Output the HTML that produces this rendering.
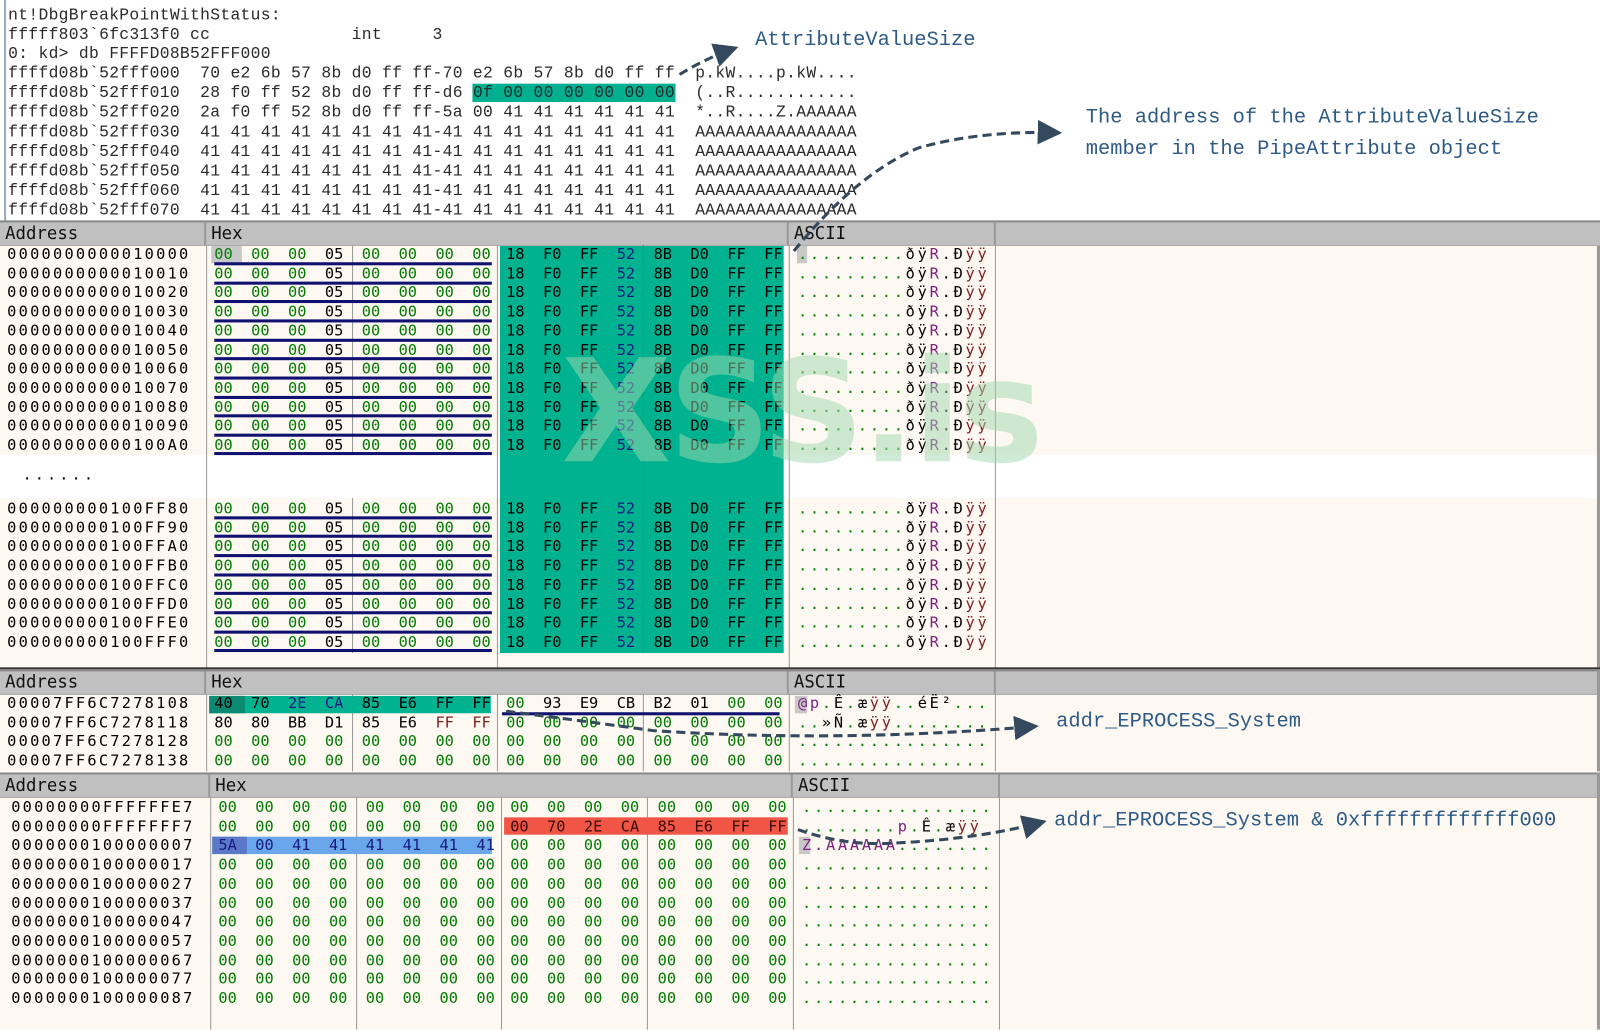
<!DOCTYPE html>
<html><head><meta charset="utf-8"><style>
body{margin:0;width:1600px;height:1009px;position:relative;overflow:hidden;background:#fff;font-family:"DejaVu Sans Mono",monospace}
#w{position:absolute;left:0;top:0;width:1568px;height:989px;transform:scale(1.0204);transform-origin:0 0}
.t{position:absolute;left:8px;font:16px/19.1px "Liberation Mono",monospace;letter-spacing:0.3px;color:#2a2a2a;white-space:pre;margin:0}
.bg{position:absolute;background:#fdf8f1}
.hd{position:absolute;background:#c0c0c0;height:22px;font:17px/22px "DejaVu Sans Mono",monospace;color:#111;border-top:2px solid #8a8a8a;border-bottom:1px solid #aaa}
.hd span{position:absolute;top:0;padding-left:5px;border-right:2px solid #9a9a9a;height:22px;box-sizing:border-box}
.r{position:absolute;left:0;height:18.7px;font:15px/18.7px "DejaVu Sans Mono",monospace;white-space:pre}
.r span{position:absolute;top:0}
.r b,.r i{font-weight:normal;font-style:normal}
.a{left:7px;letter-spacing:2.2px;color:#000}
.h1{left:210px;color:#007a00}
.h2{left:496px;color:#007a00}
.s{left:782px;letter-spacing:2.7px;color:#008000}
.k{color:#000}.n{color:#1a1a80}.p{color:#802080}.b{color:#802020}
.tl .h2{color:#000}
.vl{position:absolute;width:1px;background:#999}
.ul{position:absolute;height:3px;background:#101070}
.ann{position:absolute;font:20px/31px "Liberation Mono",monospace;color:#2d5a86;white-space:pre}
</style></head><body><div id="w">
<div style="position:absolute;left:4px;top:0;width:2px;height:218px;background:#9ab"></div>
<pre class="t" style="top:6px">nt!DbgBreakPointWithStatus:
fffff803`6fc313f0 cc              int     3
0: kd&gt; db FFFFD08B52FFF000
ffffd08b`52fff000  70 e2 6b 57 8b d0 ff ff-70 e2 6b 57 8b d0 ff ff  p.kW....p.kW....
ffffd08b`52fff010  28 f0 ff 52 8b d0 ff ff-d6 <span style="background:#00b08f">0f 00 00 00 00 00 00</span>  (..R............
ffffd08b`52fff020  2a f0 ff 52 8b d0 ff ff-5a 00 41 41 41 41 41 41  *..R....Z.AAAAAA
ffffd08b`52fff030  41 41 41 41 41 41 41 41-41 41 41 41 41 41 41 41  AAAAAAAAAAAAAAAA
ffffd08b`52fff040  41 41 41 41 41 41 41 41-41 41 41 41 41 41 41 41  AAAAAAAAAAAAAAAA
ffffd08b`52fff050  41 41 41 41 41 41 41 41-41 41 41 41 41 41 41 41  AAAAAAAAAAAAAAAA
ffffd08b`52fff060  41 41 41 41 41 41 41 41-41 41 41 41 41 41 41 41  AAAAAAAAAAAAAAAA
ffffd08b`52fff070  41 41 41 41 41 41 41 41-41 41 41 41 41 41 41 41  AAAAAAAAAAAAAAAA</pre>

<div class="bg" style="left:0;top:239px;width:1565px;height:207px"></div>
<div class="bg" style="left:0;top:488px;width:1565px;height:167px"></div>
<div style="position:absolute;left:1565px;top:217px;width:3px;height:440px;background:#999"></div>
<div style="position:absolute;left:490px;top:240px;width:278px;height:400px;background:#00b28f"></div>
<div class="hd" style="left:0;top:216px;width:1568px"><span style="left:0;width:202px">Address</span><span style="left:202px;width:571px">Hex</span><span style="left:773px;width:203px">ASCII</span></div>
<div class="vl" style="left:202px;top:240px;height:415px"></div>
<div class="vl" style="left:345px;top:240px;height:206px"></div>
<div class="vl" style="left:345px;top:488px;height:152px"></div>
<div class="vl" style="left:487px;top:240px;height:415px"></div>
<div class="vl" style="left:630px;top:240px;height:400px;background:#0a7"></div>
<div class="vl" style="left:773px;top:240px;height:415px"></div>
<div class="vl" style="left:975px;top:240px;height:415px"></div>
<div style="position:absolute;left:0;top:654px;width:1568px;height:2px;background:#333"></div>
<div style="position:absolute;left:207px;top:241px;width:30px;height:17px;background:#c8c8c8"></div>
<div style="position:absolute;left:781px;top:241px;width:10px;height:17px;background:#c8c8c8"></div>

<div class="r tl" style="top:240px"><span class="a">0000000000010000</span><span class="h1">00  00  00  <b class="k">05</b>  00  00  00  00</span><span class="h2">18  F0  FF  <i class="n">52</i>  8B  D0  FF  FF</span><span class="s">.........<b class="k">ðÿ</b><b class="p">R</b><b class="k">.Ð</b><b class="b">ÿÿ</b></span></div>
<div class="r tl" style="top:258.7px"><span class="a">0000000000010010</span><span class="h1">00  00  00  <b class="k">05</b>  00  00  00  00</span><span class="h2">18  F0  FF  <i class="n">52</i>  8B  D0  FF  FF</span><span class="s">.........<b class="k">ðÿ</b><b class="p">R</b><b class="k">.Ð</b><b class="b">ÿÿ</b></span></div>
<div class="r tl" style="top:277.4px"><span class="a">0000000000010020</span><span class="h1">00  00  00  <b class="k">05</b>  00  00  00  00</span><span class="h2">18  F0  FF  <i class="n">52</i>  8B  D0  FF  FF</span><span class="s">.........<b class="k">ðÿ</b><b class="p">R</b><b class="k">.Ð</b><b class="b">ÿÿ</b></span></div>
<div class="r tl" style="top:296.1px"><span class="a">0000000000010030</span><span class="h1">00  00  00  <b class="k">05</b>  00  00  00  00</span><span class="h2">18  F0  FF  <i class="n">52</i>  8B  D0  FF  FF</span><span class="s">.........<b class="k">ðÿ</b><b class="p">R</b><b class="k">.Ð</b><b class="b">ÿÿ</b></span></div>
<div class="r tl" style="top:314.8px"><span class="a">0000000000010040</span><span class="h1">00  00  00  <b class="k">05</b>  00  00  00  00</span><span class="h2">18  F0  FF  <i class="n">52</i>  8B  D0  FF  FF</span><span class="s">.........<b class="k">ðÿ</b><b class="p">R</b><b class="k">.Ð</b><b class="b">ÿÿ</b></span></div>
<div class="r tl" style="top:333.5px"><span class="a">0000000000010050</span><span class="h1">00  00  00  <b class="k">05</b>  00  00  00  00</span><span class="h2">18  F0  FF  <i class="n">52</i>  8B  D0  FF  FF</span><span class="s">.........<b class="k">ðÿ</b><b class="p">R</b><b class="k">.Ð</b><b class="b">ÿÿ</b></span></div>
<div class="r tl" style="top:352.2px"><span class="a">0000000000010060</span><span class="h1">00  00  00  <b class="k">05</b>  00  00  00  00</span><span class="h2">18  F0  FF  <i class="n">52</i>  8B  D0  FF  FF</span><span class="s">.........<b class="k">ðÿ</b><b class="p">R</b><b class="k">.Ð</b><b class="b">ÿÿ</b></span></div>
<div class="r tl" style="top:370.9px"><span class="a">0000000000010070</span><span class="h1">00  00  00  <b class="k">05</b>  00  00  00  00</span><span class="h2">18  F0  FF  <i class="n">52</i>  8B  D0  FF  FF</span><span class="s">.........<b class="k">ðÿ</b><b class="p">R</b><b class="k">.Ð</b><b class="b">ÿÿ</b></span></div>
<div class="r tl" style="top:389.6px"><span class="a">0000000000010080</span><span class="h1">00  00  00  <b class="k">05</b>  00  00  00  00</span><span class="h2">18  F0  FF  <i class="n">52</i>  8B  D0  FF  FF</span><span class="s">.........<b class="k">ðÿ</b><b class="p">R</b><b class="k">.Ð</b><b class="b">ÿÿ</b></span></div>
<div class="r tl" style="top:408.3px"><span class="a">0000000000010090</span><span class="h1">00  00  00  <b class="k">05</b>  00  00  00  00</span><span class="h2">18  F0  FF  <i class="n">52</i>  8B  D0  FF  FF</span><span class="s">.........<b class="k">ðÿ</b><b class="p">R</b><b class="k">.Ð</b><b class="b">ÿÿ</b></span></div>
<div class="r tl" style="top:427px"><span class="a">00000000000100A0</span><span class="h1">00  00  00  <b class="k">05</b>  00  00  00  00</span><span class="h2">18  F0  FF  <i class="n">52</i>  8B  D0  FF  FF</span><span class="s">.........<b class="k">ðÿ</b><b class="p">R</b><b class="k">.Ð</b><b class="b">ÿÿ</b></span></div>
<div class="r" style="top:456px"><span class="a" style="left:22px;letter-spacing:3px">......</span></div>
<div class="r tl" style="top:489px"><span class="a">000000000100FF80</span><span class="h1">00  00  00  <b class="k">05</b>  00  00  00  00</span><span class="h2">18  F0  FF  <i class="n">52</i>  8B  D0  FF  FF</span><span class="s">.........<b class="k">ðÿ</b><b class="p">R</b><b class="k">.Ð</b><b class="b">ÿÿ</b></span></div>
<div class="r tl" style="top:507.7px"><span class="a">000000000100FF90</span><span class="h1">00  00  00  <b class="k">05</b>  00  00  00  00</span><span class="h2">18  F0  FF  <i class="n">52</i>  8B  D0  FF  FF</span><span class="s">.........<b class="k">ðÿ</b><b class="p">R</b><b class="k">.Ð</b><b class="b">ÿÿ</b></span></div>
<div class="r tl" style="top:526.4px"><span class="a">000000000100FFA0</span><span class="h1">00  00  00  <b class="k">05</b>  00  00  00  00</span><span class="h2">18  F0  FF  <i class="n">52</i>  8B  D0  FF  FF</span><span class="s">.........<b class="k">ðÿ</b><b class="p">R</b><b class="k">.Ð</b><b class="b">ÿÿ</b></span></div>
<div class="r tl" style="top:545.1px"><span class="a">000000000100FFB0</span><span class="h1">00  00  00  <b class="k">05</b>  00  00  00  00</span><span class="h2">18  F0  FF  <i class="n">52</i>  8B  D0  FF  FF</span><span class="s">.........<b class="k">ðÿ</b><b class="p">R</b><b class="k">.Ð</b><b class="b">ÿÿ</b></span></div>
<div class="r tl" style="top:563.8px"><span class="a">000000000100FFC0</span><span class="h1">00  00  00  <b class="k">05</b>  00  00  00  00</span><span class="h2">18  F0  FF  <i class="n">52</i>  8B  D0  FF  FF</span><span class="s">.........<b class="k">ðÿ</b><b class="p">R</b><b class="k">.Ð</b><b class="b">ÿÿ</b></span></div>
<div class="r tl" style="top:582.5px"><span class="a">000000000100FFD0</span><span class="h1">00  00  00  <b class="k">05</b>  00  00  00  00</span><span class="h2">18  F0  FF  <i class="n">52</i>  8B  D0  FF  FF</span><span class="s">.........<b class="k">ðÿ</b><b class="p">R</b><b class="k">.Ð</b><b class="b">ÿÿ</b></span></div>
<div class="r tl" style="top:601.2px"><span class="a">000000000100FFE0</span><span class="h1">00  00  00  <b class="k">05</b>  00  00  00  00</span><span class="h2">18  F0  FF  <i class="n">52</i>  8B  D0  FF  FF</span><span class="s">.........<b class="k">ðÿ</b><b class="p">R</b><b class="k">.Ð</b><b class="b">ÿÿ</b></span></div>
<div class="r tl" style="top:619.9px"><span class="a">000000000100FFF0</span><span class="h1">00  00  00  <b class="k">05</b>  00  00  00  00</span><span class="h2">18  F0  FF  <i class="n">52</i>  8B  D0  FF  FF</span><span class="s">.........<b class="k">ðÿ</b><b class="p">R</b><b class="k">.Ð</b><b class="b">ÿÿ</b></span></div>
<div class="ul" style="left:210px;top:257px;width:272px"></div>
<div class="ul" style="left:210px;top:276px;width:272px"></div>
<div class="ul" style="left:210px;top:294px;width:272px"></div>
<div class="ul" style="left:210px;top:313px;width:272px"></div>
<div class="ul" style="left:210px;top:332px;width:272px"></div>
<div class="ul" style="left:210px;top:350px;width:272px"></div>
<div class="ul" style="left:210px;top:369px;width:272px"></div>
<div class="ul" style="left:210px;top:388px;width:272px"></div>
<div class="ul" style="left:210px;top:406px;width:272px"></div>
<div class="ul" style="left:210px;top:425px;width:272px"></div>
<div class="ul" style="left:210px;top:443px;width:272px"></div>
<div class="ul" style="left:210px;top:506px;width:272px"></div>
<div class="ul" style="left:210px;top:524px;width:272px"></div>
<div class="ul" style="left:210px;top:543px;width:272px"></div>
<div class="ul" style="left:210px;top:562px;width:272px"></div>
<div class="ul" style="left:210px;top:580px;width:272px"></div>
<div class="ul" style="left:210px;top:599px;width:272px"></div>
<div class="ul" style="left:210px;top:618px;width:272px"></div>
<div class="ul" style="left:210px;top:636px;width:272px"></div>

<div style="position:absolute;left:550px;top:335px;font:bold 140px/1 'DejaVu Sans',sans-serif;color:rgba(160,215,175,.5);letter-spacing:-3px">XSS.is</div>

<div class="bg" style="left:0;top:680px;width:1565px;height:76px"></div>
<div class="hd" style="left:0;top:656px;width:1568px"><span style="left:0;width:202px">Address</span><span style="left:202px;width:571px">Hex</span><span style="left:773px;width:203px">ASCII</span></div>
<div style="position:absolute;left:1565px;top:656px;width:3px;height:100px;background:#999"></div>
<div class="vl" style="left:202px;top:680px;height:76px"></div>
<div class="vl" style="left:345px;top:680px;height:76px"></div>
<div class="vl" style="left:487px;top:680px;height:76px"></div>
<div class="vl" style="left:630px;top:680px;height:76px"></div>
<div class="vl" style="left:773px;top:680px;height:76px"></div>
<div class="vl" style="left:975px;top:680px;height:76px"></div>
<div style="position:absolute;left:205px;top:682px;width:276px;height:17px;background:#00b28f"></div>
<div style="position:absolute;left:205px;top:682px;width:35px;height:17px;background:#0a8a72"></div>
<div style="position:absolute;left:779px;top:682px;width:12px;height:17px;background:#c8c8c8"></div>
<div class="ul" style="left:492px;top:698px;width:272px"></div>
<div class="r" style="top:680px"><span class="a">00007FF6C7278108</span><span class="h1" style="color:#000">40  70  <i class="n">2E</i>  <i class="n">CA</i>  85  E6  FF  FF</span><span class="h2">00  <b class="k">93  E9  CB  B2  01</b>  00  00</span><span class="s"><b class="p">@p</b>.<b class="k">Ê</b>.<b class="k">æ</b><b class="b">ÿÿ</b>..<b class="k">éË²</b>...</span></div>
<div class="r" style="top:698.7px"><span class="a">00007FF6C7278118</span><span class="h1" style="color:#000">80  80  BB  D1  85  E6  <b class="b">FF  FF</b></span><span class="h2">00  00  00  00  00  00  00  00</span><span class="s">..<b class="k">»Ñ</b>.<b class="k">æ</b><b class="b">ÿÿ</b>........</span></div>
<div class="r" style="top:717.4px"><span class="a">00007FF6C7278128</span><span class="h1">00  00  00  00  00  00  00  00</span><span class="h2">00  00  00  00  00  00  00  00</span><span class="s">................</span></div>
<div class="r" style="top:736.1px"><span class="a">00007FF6C7278138</span><span class="h1">00  00  00  00  00  00  00  00</span><span class="h2">00  00  00  00  00  00  00  00</span><span class="s">................</span></div>

<div class="bg" style="left:0;top:781px;width:1565px;height:228px"></div>
<div class="hd" style="left:0;top:757px;width:1568px"><span style="left:0;width:206px">Address</span><span style="left:206px;width:571px">Hex</span><span style="left:777px;width:203px">ASCII</span></div>
<div style="position:absolute;left:1565px;top:757px;width:3px;height:252px;background:#999"></div>
<div class="vl" style="left:206px;top:781px;height:228px"></div>
<div class="vl" style="left:349px;top:781px;height:228px"></div>
<div class="vl" style="left:491px;top:781px;height:228px"></div>
<div class="vl" style="left:634px;top:781px;height:228px"></div>
<div class="vl" style="left:777px;top:781px;height:228px"></div>
<div class="vl" style="left:979px;top:781px;height:228px"></div>
<div style="position:absolute;left:494px;top:801px;width:278px;height:17px;background:#f05545"></div>
<div style="position:absolute;left:208px;top:820px;width:274px;height:17px;background:#6aa6ea"></div>
<div style="position:absolute;left:208px;top:820px;width:34px;height:17px;background:#5a78c8"></div>
<div style="position:absolute;left:783px;top:820px;width:11px;height:17px;background:#c8c8c8"></div>
<div style="position:absolute;left:4px;top:0;width:1560px">
<div class="r" style="top:782px"><span class="a">00000000FFFFFFE7</span><span class="h1">00  00  00  00  00  00  00  00</span><span class="h2">00  00  00  00  00  00  00  00</span><span class="s">................</span></div>
<div class="r" style="top:800.7px"><span class="a">00000000FFFFFFF7</span><span class="h1">00  00  00  00  00  00  00  00</span><span class="h2" style="color:#3a0a0a">00  70  2E  CA  85  E6  FF  FF</span><span class="s">........<b class="p">p</b>.<b class="k">Ê</b>.<b class="k">æ</b><b class="b">ÿÿ</b></span></div>
<div class="r" style="top:819.4px"><span class="a">0000000100000007</span><span class="h1" style="color:#1a1a80">5A  00  41  41  41  41  41  41</span><span class="h2">00  00  00  00  00  00  00  00</span><span class="s"><b class="p">Z.AAAAAA</b>........</span></div>
<div class="r" style="top:838.1px"><span class="a">0000000100000017</span><span class="h1">00  00  00  00  00  00  00  00</span><span class="h2">00  00  00  00  00  00  00  00</span><span class="s">................</span></div>
<div class="r" style="top:856.8px"><span class="a">0000000100000027</span><span class="h1">00  00  00  00  00  00  00  00</span><span class="h2">00  00  00  00  00  00  00  00</span><span class="s">................</span></div>
<div class="r" style="top:875.5px"><span class="a">0000000100000037</span><span class="h1">00  00  00  00  00  00  00  00</span><span class="h2">00  00  00  00  00  00  00  00</span><span class="s">................</span></div>
<div class="r" style="top:894.2px"><span class="a">0000000100000047</span><span class="h1">00  00  00  00  00  00  00  00</span><span class="h2">00  00  00  00  00  00  00  00</span><span class="s">................</span></div>
<div class="r" style="top:912.9px"><span class="a">0000000100000057</span><span class="h1">00  00  00  00  00  00  00  00</span><span class="h2">00  00  00  00  00  00  00  00</span><span class="s">................</span></div>
<div class="r" style="top:931.6px"><span class="a">0000000100000067</span><span class="h1">00  00  00  00  00  00  00  00</span><span class="h2">00  00  00  00  00  00  00  00</span><span class="s">................</span></div>
<div class="r" style="top:950.3px"><span class="a">0000000100000077</span><span class="h1">00  00  00  00  00  00  00  00</span><span class="h2">00  00  00  00  00  00  00  00</span><span class="s">................</span></div>
<div class="r" style="top:969px"><span class="a">0000000100000087</span><span class="h1">00  00  00  00  00  00  00  00</span><span class="h2">00  00  00  00  00  00  00  00</span><span class="s">................</span></div>
</div>

<div class="ann" style="left:740px;top:24px">AttributeValueSize</div>
<div class="ann" style="left:1064px;top:100px">The address of the AttributeValueSize
member in the PipeAttribute object</div>
<div class="ann" style="left:1035px;top:692px">addr_EPROCESS_System</div>
<div class="ann" style="left:1033px;top:789px">addr_EPROCESS_System &amp; 0xfffffffffffff000</div>

<svg style="position:absolute;left:0;top:0" width="1568" height="989">
<defs><marker id="ah" markerWidth="8" markerHeight="8" refX="6" refY="4" orient="auto"><path d="M0,0 L8,4 L0,8 Z" fill="#34495e"/></marker></defs>
<g fill="none" stroke="#34495e" stroke-width="3" stroke-dasharray="9,5">
<path d="M666,73 Q690,58 718,48" marker-end="url(#ah)"/>
<path d="M778,246 Q840,170 900,145 Q960,128 1035,130" marker-end="url(#ah)"/>
<path d="M496,697 Q560,705 640,716 Q820,728 1012,712" marker-end="url(#ah)"/>
<path d="M782,813 Q830,830 880,826 Q960,822 1020,806" marker-end="url(#ah)"/>
</g></svg>
</div></body></html>
